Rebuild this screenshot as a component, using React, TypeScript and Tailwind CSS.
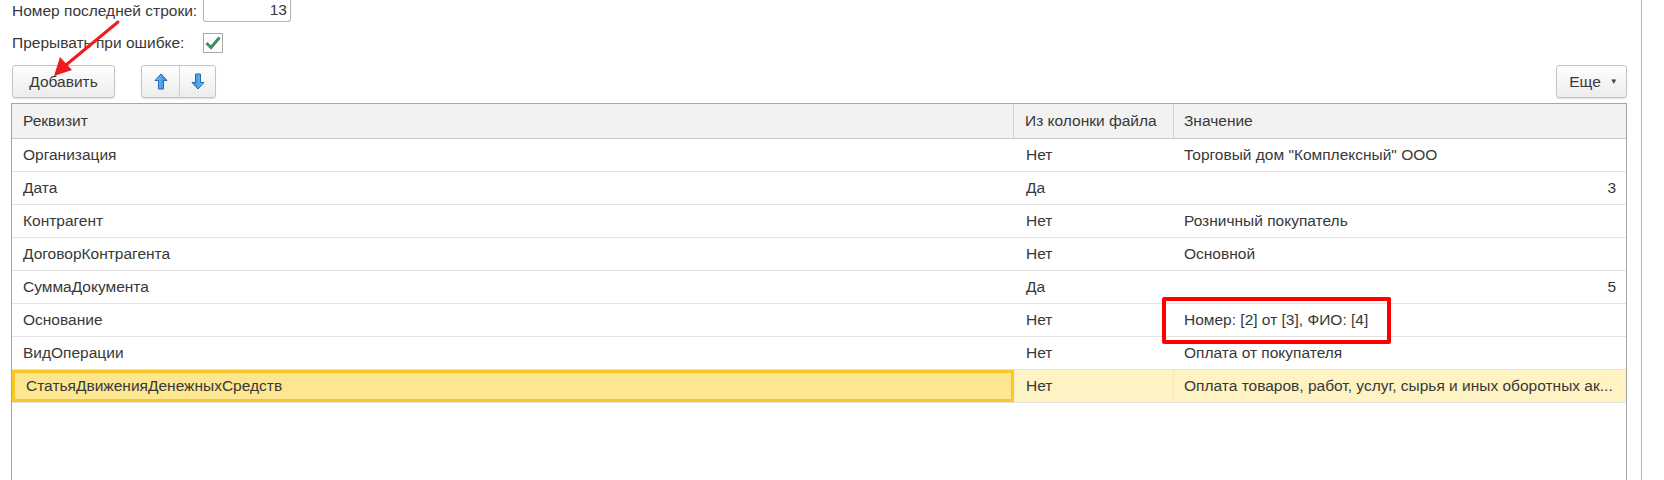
import React from "react";

type Row = {
  name: string;
  fromFile: string;
  value: string;
  numeric?: boolean;
  marked?: boolean;
  selected?: boolean;
};

const rows: Row[] = [
  { name: "Организация", fromFile: "Нет", value: 'Торговый дом "Комплексный" ООО' },
  { name: "Дата", fromFile: "Да", value: "3", numeric: true },
  { name: "Контрагент", fromFile: "Нет", value: "Розничный покупатель" },
  { name: "ДоговорКонтрагента", fromFile: "Нет", value: "Основной" },
  { name: "СуммаДокумента", fromFile: "Да", value: "5", numeric: true },
  { name: "Основание", fromFile: "Нет", value: "Номер: [2] от [3], ФИО: [4]", marked: true },
  { name: "ВидОперации", fromFile: "Нет", value: "Оплата от покупателя" },
  {
    name: "СтатьяДвиженияДенежныхСредств",
    fromFile: "Нет",
    value: "Оплата товаров, работ, услуг, сырья и иных оборотных ак...",
    selected: true,
  },
];

const btn =
  "flex items-center rounded-[3px] border border-[#c4c4c4] bg-gradient-to-b from-white to-[#ececec] shadow-[0_1px_1px_rgba(0,0,0,0.12)]";

const Arrow = ({ down }: { down?: boolean }) => (
  <svg width="14" height="17" viewBox="0 0 14 17" className={down ? "rotate-180" : ""}>
    <defs>
      <linearGradient id={down ? "ad" : "au"} x1="0" y1="0" x2="1" y2="0">
        <stop offset="0" stopColor="#7cc0f7" />
        <stop offset="1" stopColor="#2f86dc" />
      </linearGradient>
    </defs>
    <path
      d="M7 1 L13 7.5 H9.5 V16 H4.5 V7.5 H1 Z"
      fill={`url(#${down ? "ad" : "au"})`}
      stroke="#2368b3"
      strokeWidth="1"
      strokeLinejoin="round"
    />
  </svg>
);

export default function App() {
  return (
    <div className="flex h-[480px] w-[1664px] overflow-hidden bg-white font-['Liberation_Sans',Arial,sans-serif] text-[15.5px] text-[#383838]">
      <div className="relative flex w-[1642px] flex-col border-r border-[#b8b8b8] pr-[14px]">
        {/* Параметры загрузки */}
        <div className="flex h-[21px] items-center pl-[12px]">
          <span className="w-[191px]">Номер последней строки:</span>
          <div className="flex h-[22px] w-[88px] items-center justify-end rounded-b-[3px] border border-t-0 border-[#b4b4b4] pr-[3px]">
            13
          </div>
        </div>
        <div className="mt-[12px] flex h-[20px] items-center pl-[12px]">
          <span className="w-[191px]">Прерывать при ошибке:</span>
          <div className="flex h-[20px] w-[20px] items-center justify-center border border-[#a8a8a8] bg-white">
            <svg width="16" height="14" viewBox="0 0 16 14">
              <path d="M1.5 7 L6 11.5 L14.5 1.5" fill="none" stroke="#3d8d62" strokeWidth="3" />
            </svg>
          </div>
        </div>

        {/* Командная панель */}
        <div className="mt-[12px] flex h-[33px] items-stretch pl-[12px]">
          <button className={`${btn} w-[103px] justify-center`}>Добавить</button>
          <div className={`${btn} ml-[26px] w-[75px] items-stretch`}>
            <div className="flex w-[38px] items-center justify-center border-r border-[#cfcfcf]">
              <Arrow />
            </div>
            <div className="flex flex-1 items-center justify-center">
              <Arrow down />
            </div>
          </div>
          <div className="flex-1" />
          <button className={`${btn} w-[71px] justify-center gap-[9px] pl-[4px]`}>
            <span>Еще</span>
            <span className="text-[8px] text-[#444]">▼</span>
          </button>
        </div>

        {/* Таблица реквизитов */}
        <div className="mt-[5px] ml-[11px] flex flex-1 flex-col border-l border-t border-r border-[#a6a6a6]">
          <div className="flex h-[35px] border-b border-[#c9c9c9] bg-[#f2f2f2]">
            <div className="flex w-[1002px] items-center border-r border-[#d2d2d2] pl-[11px]">Реквизит</div>
            <div className="flex w-[160px] items-center border-r border-[#d2d2d2] pl-[11px]">Из колонки файла</div>
            <div className="flex flex-1 items-center pl-[10px]">Значение</div>
          </div>
          {rows.map((r) => (
            <div
              key={r.name}
              className={`flex h-[33px] border-b border-[#e3e3e3] ${r.selected ? "bg-[#fff3c4]" : ""}`}
            >
              <div
                className={`flex w-[1002px] items-center pl-[11px] ${
                  r.selected ? "border-[3px] border-[#f9c824] bg-[#fde68f] pl-[7px]" : ""
                }`}
              >
                {r.name}
              </div>
              <div
                className={`flex w-[160px] items-center pl-[12px] ${
                  r.selected ? "border-r border-[#fbe7a6]" : ""
                }`}
              >
                {r.fromFile}
              </div>
              <div
                className={`relative flex min-w-0 flex-1 items-center pl-[10px] pr-[10px] ${
                  r.numeric ? "justify-end" : ""
                }`}
              >
                <span className="truncate">{r.value}</span>
                {r.marked && (
                  <div className="pointer-events-none absolute left-[-12px] top-[-7px] h-[47px] w-[229px] rounded-[2px] border-[4px] border-[#ff0000]" />
                )}
              </div>
            </div>
          ))}
        </div>

        {/* Стрелка-указатель */}
        <svg className="pointer-events-none absolute left-0 top-0" width="140" height="90" viewBox="0 0 140 90">
          <line x1="118" y1="22" x2="66" y2="65" stroke="#ee1c1c" strokeWidth="3" strokeLinecap="round" />
          <path d="M54 76 L60 57 L72 70 Z" fill="#ee1c1c" />
        </svg>
      </div>
    </div>
  );
}
